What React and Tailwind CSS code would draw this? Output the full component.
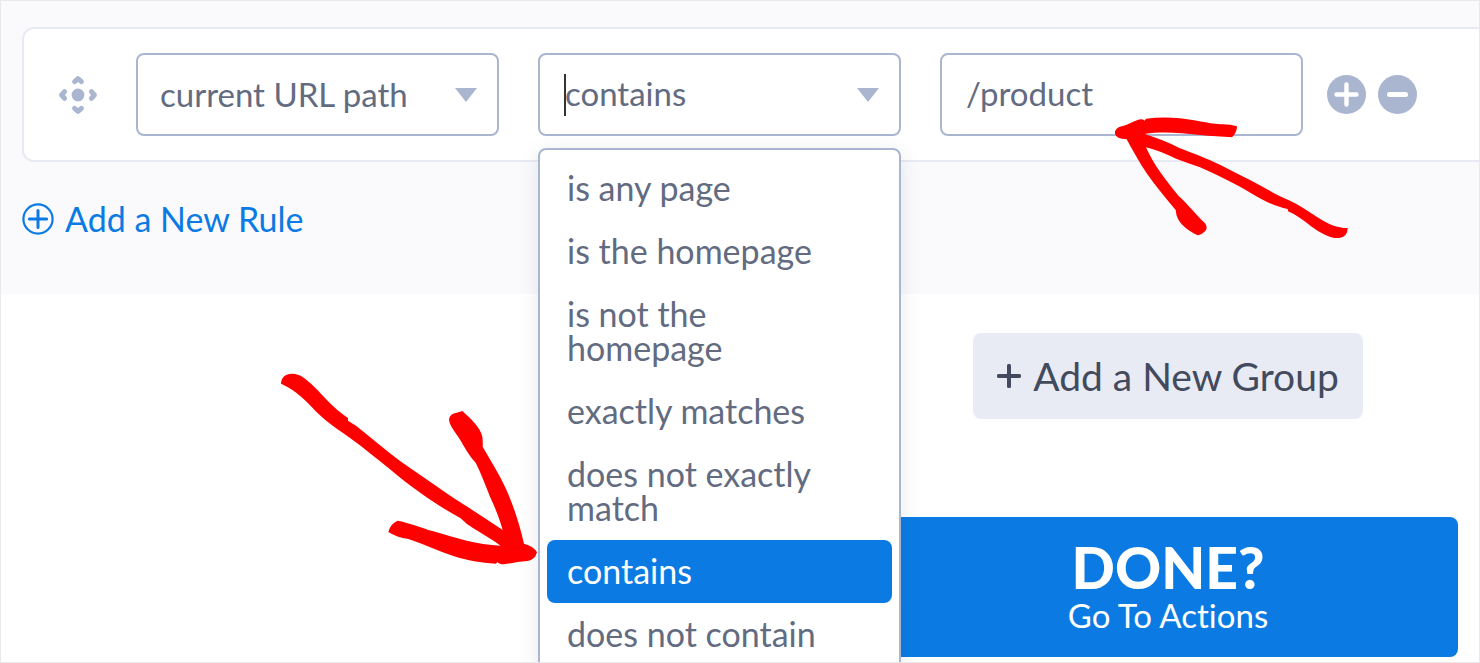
import { useState } from "react";

const OPERATORS = [
  "is any page",
  "is the homepage",
  "is not the homepage",
  "exactly matches",
  "does not exactly match",
  "contains",
  "does not contain",
];

const FIELD =
  "h-[83px] w-full appearance-none rounded-lg border-2 border-[#aab6d0] bg-white text-[33px] text-[#626b7f] outline-none";

function Caret() {
  return (
    <svg
      className="pointer-events-none absolute inset-y-0 right-[22px] my-auto h-[14px] w-[22px] fill-[#aab6d0]"
      viewBox="0 0 22 14"
      aria-hidden="true"
    >
      <path d="M0 0h22L11 14z" />
    </svg>
  );
}

function MoveIcon() {
  return (
    <svg className="size-10" viewBox="0 0 40 40" aria-hidden="true">
      <circle cx="20" cy="20" r="6.4" fill="#aab6d0" />
      <g fill="none" stroke="#aab6d0" strokeWidth="5" strokeLinecap="round" strokeLinejoin="round">
        <path d="M16.6 6.6 20 3.6l3.4 3" />
        <path d="M16.6 33.4 20 36.4l3.4-3" />
        <path d="M6.6 16.6 3.6 20l3 3.4" />
        <path d="M33.4 16.6 36.4 20l-3 3.4" />
      </g>
    </svg>
  );
}

function ArrowToOption() {
  return (
    <svg
      className="pointer-events-none absolute right-full top-[319px] z-20 h-[194px] w-[258px] fill-[#ff0000]"
      viewBox="60 66 774 582"
      aria-hidden="true"
    >
      <path d="M63 101C64 80 78 70 98 71C120 72 134 84 154 102C182 128 198 150 233 181Q250 195 264 204L264 212C282 222 298 234 316 250C340 270 365 290 390 310C428 340 470 368 510 395C545 419 580 444 610 463C650 488 690 514 728 540C718 505 706 474 690 440C676 404 662 368 647 338C625 315 612 288 597 264C582 242 568 226 567 208Q570 190 590 188L607 183C635 208 662 235 667 260Q669 275 668 290C692 332 716 370 735 410C760 465 778 520 792 581Q820 588 831 607Q825 630 803 633C775 634 755 640 732 643Q718 643 712 636L708 641C660 638 625 632 580 618C535 603 490 582 445 567Q410 562 385 546Q390 522 413 512C445 518 480 532 520 544C590 565 650 584 722 587C695 568 668 552 640 535Q618 522 602 505C565 484 528 462 490 435C455 411 422 385 390 358C350 326 312 294 270 264C245 246 220 230 196 210C165 184 150 164 124 141C105 124 86 111 63 101Z" />
    </svg>
  );
}

function ArrowToValue() {
  return (
    <svg
      className="pointer-events-none absolute left-[174px] top-[63px] z-20 h-[123px] w-[235px] fill-[#ff0000]"
      viewBox="42 48 705 369"
      aria-hidden="true"
    >
      <path d="M45 101C44 88 52 82 68 78C85 73 98 64 115 59Q128 55 134 62L138 56C170 52 205 51 240 55C285 60 320 70 362 73Q390 72 411 79Q411 98 396 112C350 110 300 105 245 100C210 97 170 96 134 102C170 113 205 126 240 145C262 154 280 160 300 168C325 178 342 186 360 194C390 209 420 225 450 240C492 262 530 286 570 302C598 315 624 333 650 350C682 372 712 384 743 384Q743 410 718 414C690 416 660 398 635 380C610 361 590 345 564 334L563 327C542 322 520 315 500 305C473 291 446 275 420 260C380 239 340 219 300 202C277 194 254 186 230 177C200 163 170 150 138 142C150 168 164 193 180 215C198 240 216 264 236 288C265 314 290 347 315 370Q323 380 318 390Q310 402 294 406C270 396 245 377 234 357Q228 345 227 330C198 296 168 260 140 220C118 187 98 152 80 118Q48 116 45 101Z" />
    </svg>
  );
}

export default function App() {
  const [operator, setOperator] = useState("contains");
  const [value, setValue] = useState("/product");

  return (
    <main className="relative h-screen overflow-hidden border border-[#e9e9eb] bg-white font-['Lato',sans-serif] text-[#626b7f] [font-variant-ligatures:none]">
      <section className="bg-[#fafafd] pb-[55px] pl-[21px] pt-[26px]">
        <div className="flex items-center rounded-l-xl border-2 border-r-0 border-[#e8ebf3] bg-white py-[24px] pl-[34px] pr-[62px]">
          <button type="button" aria-label="Move rule" className="shrink-0">
            <MoveIcon />
          </button>

          <div className="ml-[38px] flex min-w-0 flex-1 gap-[39px]">
            <div className="relative min-w-0 flex-1">
              <select
                aria-label="Condition"
                defaultValue="path"
                className={`${FIELD} pl-[22px] pr-[48px]`}
              >
                <option value="path">current URL path</option>
              </select>
              <Caret />
            </div>

            <div className="relative min-w-0 flex-1">
              <input
                role="combobox"
                aria-label="Operator"
                aria-expanded="true"
                aria-controls="operator-list"
                value={operator}
                onChange={(event) => setOperator(event.target.value)}
                className={`${FIELD} pb-[3px] pl-[25px] pr-[48px]`}
              />
              <span className="absolute inset-y-0 left-[26px] my-auto h-[42px] w-[2px] bg-[#333]" />
              <Caret />
              <ul
                id="operator-list"
                role="listbox"
                aria-label="Operators"
                className="absolute inset-x-0 top-[95px] z-10 rounded-lg border-2 border-[#aab6d0] bg-white p-[7px] shadow-[0_4px_20px_rgba(60,70,100,0.12)]"
              >
                {OPERATORS.map((name) => (
                  <li
                    key={name}
                    role="option"
                    aria-selected={name === operator}
                    onClick={() => setOperator(name)}
                    className="rounded-lg pb-[15px] pl-[20px] pr-[48px] pt-[14px] text-[34px] leading-[34px] aria-selected:bg-[#0b7be3] aria-selected:text-white"
                  >
                    {name}
                  </li>
                ))}
              </ul>
              <ArrowToOption />
            </div>

            <div className="relative min-w-0 flex-1">
              <input
                aria-label="Value"
                value={value}
                onChange={(event) => setValue(event.target.value)}
                className={`${FIELD} px-[24px] pb-[3px]`}
              />
              <ArrowToValue />
            </div>
          </div>

          <div className="ml-[24px] flex shrink-0 gap-[12px]">
            <button type="button" aria-label="Add rule">
              <svg className="size-[39px]" viewBox="0 0 39 39" aria-hidden="true">
                <circle cx="19.5" cy="19.5" r="19.5" fill="#aab6d0" />
                <path d="M19.5 9.5v20M9.5 19.5h20" stroke="#fff" strokeWidth="4.4" strokeLinecap="round" />
              </svg>
            </button>
            <button type="button" aria-label="Remove rule">
              <svg className="size-[39px]" viewBox="0 0 39 39" aria-hidden="true">
                <circle cx="19.5" cy="19.5" r="19.5" fill="#aab6d0" />
                <path d="M11.5 19.5h16" stroke="#fff" strokeWidth="5" strokeLinecap="round" />
              </svg>
            </button>
          </div>
        </div>

        <button
          type="button"
          className="mt-[37px] flex items-center gap-[11px] text-[34px] leading-[40px] text-[#0b7be3]"
        >
          <svg className="size-8" viewBox="0 0 32 32" aria-hidden="true">
            <circle cx="16" cy="16" r="14.6" fill="none" stroke="currentColor" strokeWidth="2.2" />
            <path d="M16 7.4v17.2M7.4 16h17.2" stroke="currentColor" strokeWidth="3" strokeLinecap="round" />
          </svg>
          Add a New Rule
        </button>
      </section>

      <section className="flex justify-end pr-[21px] pt-[39px]">
        <div className="flex w-[580px] flex-col items-center gap-[98px]">
          <button
            type="button"
            className="flex h-[86px] items-center gap-[12px] rounded-lg bg-[#e8ebf3] px-[24px] text-[39px] text-[#434a5e]"
          >
            <svg className="size-[24px]" viewBox="0 0 24 24" aria-hidden="true">
              <path d="M12 1.8v20.4M1.8 12h20.4" stroke="currentColor" strokeWidth="4" strokeLinecap="round" />
            </svg>
            Add a New Group
          </button>
          <button
            type="button"
            className="flex h-[140px] w-full flex-col items-center justify-center rounded-lg bg-[#0b7be3] text-white"
          >
            <span className="text-[57px] font-black leading-[56px]">DONE?</span>
            <span className="text-[33px] leading-[40px]">Go To Actions</span>
          </button>
        </div>
      </section>
    </main>
  );
}
